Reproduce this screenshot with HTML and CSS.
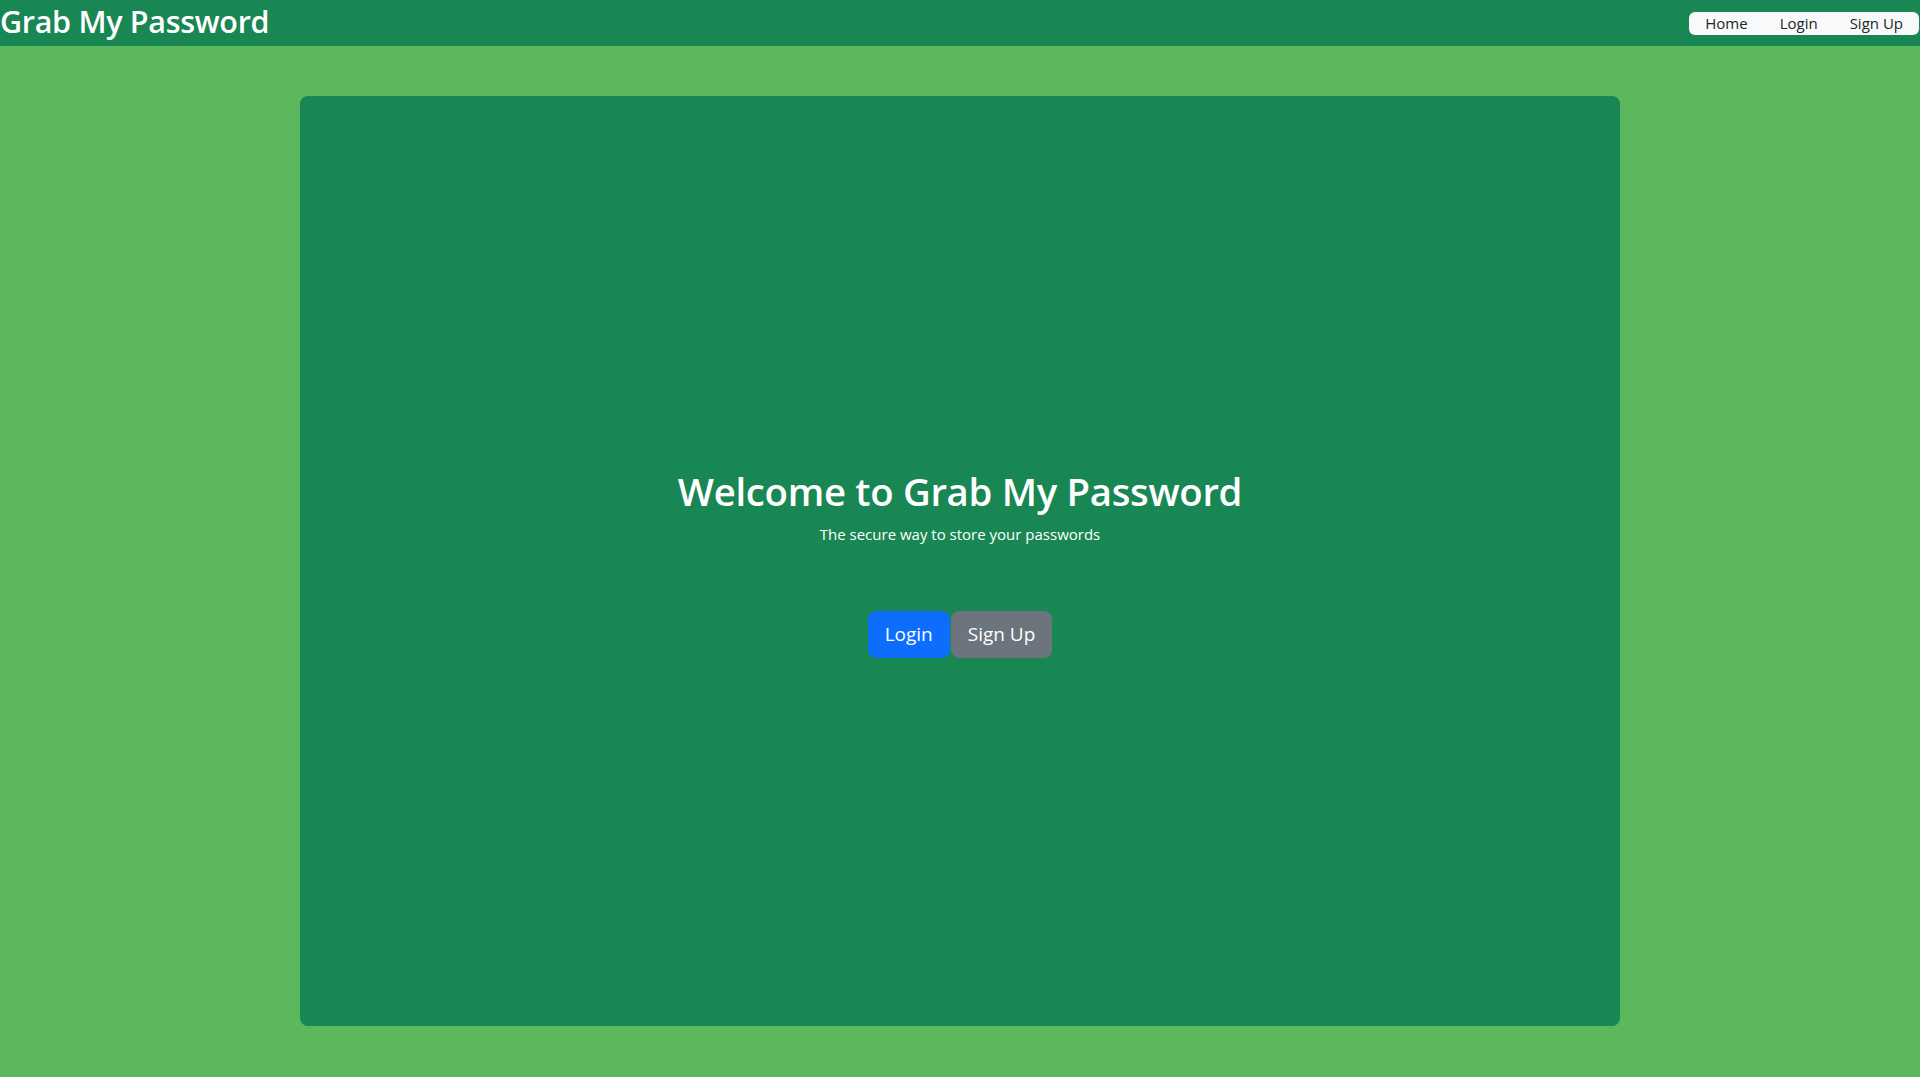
FILE: index.html
```html
<!DOCTYPE html>
<html lang="en">
<head>
<meta charset="utf-8">
<title>Grab My Password</title>
<link rel="stylesheet" href="styles.css">
</head>
<body>
<header class="topbar">
  <h2 class="brand">Grab My Password</h2>
  <nav class="nav-pill">
    <a class="nav-link" href="#">Home</a>
    <a class="nav-link" href="#">Login</a>
    <a class="nav-link" href="#">Sign Up</a>
  </nav>
</header>
<main class="page">
  <section class="hero">
    <h1 class="hero-title">Welcome to Grab My Password</h1>
    <p class="hero-sub">The secure way to store your passwords</p>
    <div class="hero-actions">
      <a class="btn btn-primary" href="#">Login</a>
      <a class="btn btn-secondary" href="#">Sign Up</a>
    </div>
  </section>
</main>
</body>
</html>
```

FILE: styles.css
```css
* { box-sizing: border-box; }
html, body { height: 100%; }
body {
  margin: 0;
  background: #5cb85c;
  font-family: "Open Sans", "Noto Sans", "Liberation Sans", sans-serif;
  color: #fff;
  display: flex;
  flex-direction: column;
}
.topbar {
  height: 46px;
  background: #198754;
  display: flex;
  align-items: center;
  justify-content: space-between;
}
.brand {
  margin: 0;
  font-size: 30.5px;
  font-weight: 600;
  line-height: 1.2;
  letter-spacing: -0.3px;
  color: #fff;
  padding-bottom: 3px;
}
.nav-pill {
  display: flex;
  background: #f8f9fa;
  border-radius: 6px;
  height: 23px;
  align-items: center;
  margin-right: 1px;
  margin-top: 1px;
}
.nav-link {
  color: #212529;
  text-decoration: none;
  font-size: 15px;
  padding: 0 16px;
  line-height: 23px;
}
.page {
  flex: 1;
  display: flex;
  justify-content: center;
  padding: 50px 0 51px;
}
.hero {
  width: 1320px;
  background: #198754;
  border-radius: 8px;
  display: flex;
  flex-direction: column;
  align-items: center;
  justify-content: center;
  text-align: center;
  padding-top: 5px;
}
.hero-title {
  margin: 0 0 8px;
  font-size: 38.3px;
  font-weight: 600;
  line-height: 1.2;
  letter-spacing: -0.3px;
}
.hero-sub {
  margin: 0 0 66px;
  font-size: 15px;
  line-height: 1.5;
}
.hero-actions {
  display: flex;
  gap: 1px;
}
.btn {
  display: inline-block;
  font-size: 19px;
  line-height: 29px;
  padding: 8px 16px;
  border: 1px solid transparent;
  border-radius: 8px;
  color: #fff;
  text-decoration: none;
}
.btn-primary { background: #0d6efd; border-color: #0d6efd; }
.btn-secondary { background: #6c757d; border-color: #6c757d; }
```
